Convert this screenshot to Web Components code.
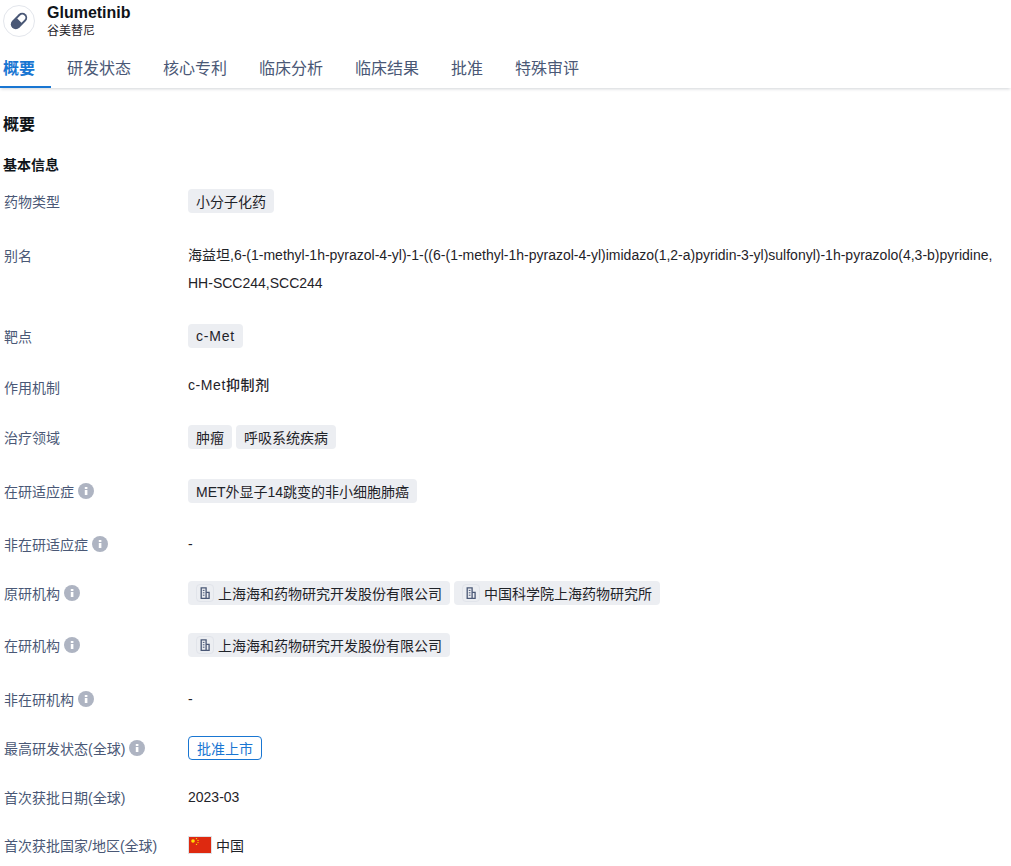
<!DOCTYPE html>
<html lang="zh">
<head>
<meta charset="utf-8">
<title>Glumetinib</title>
<style>
    html, body { margin: 0; background: #fff; }
    body { font-family: "Liberation Sans", "Noto Sans CJK SC", sans-serif; color: #1f2329; overflow: hidden; height: 866px; }
</style>
</head>
<body>
<drug-header name="Glumetinib" sub="谷美替尼"></drug-header>
<tab-bar></tab-bar>
<main-panel>
    <info-row label="药物类型" top="0"><info-tag>小分子化药</info-tag></info-row>
    <info-row label="别名" top="28" text>海益坦,6-(1-methyl-1h-pyrazol-4-yl)-1-((6-(1-methyl-1h-pyrazol-4-yl)imidazo(1,2-a)pyridin-3-yl)sulfonyl)-1h-pyrazolo(4,3-b)pyridine,<br>HH-SCC244,SCC244</info-row>
    <info-row label="靶点" top="27"><info-tag wide>c-Met</info-tag></info-row>
    <info-row label="作用机制" top="25" text strong>c-Met抑制剂</info-row>
    <info-row label="治疗领域" top="24"><info-tag>肿瘤</info-tag><info-tag>呼吸系统疾病</info-tag></info-row>
    <info-row label="在研适应症" info top="30"><info-tag>MET外显子14跳变的非小细胞肺癌</info-tag></info-row>
    <info-row label="非在研适应症" info top="29">-</info-row>
    <info-row label="原研机构" info top="25"><info-tag org>上海海和药物研究开发股份有限公司</info-tag><info-tag org>中国科学院上海药物研究所</info-tag></info-row>
    <info-row label="在研机构" info top="28"><info-tag org>上海海和药物研究开发股份有限公司</info-tag></info-row>
    <info-row label="非在研机构" info top="30">-</info-row>
    <info-row label="最高研发状态(全球)" info top="25"><status-tag>批准上市</status-tag></info-row>
    <info-row label="首次获批日期(全球)" top="25">2023-03</info-row>
    <info-row label="首次获批国家/地区(全球)" top="24"><flag-cn></flag-cn>中国</info-row>
</main-panel>

<script>
class DrugHeader extends HTMLElement {
    constructor() {
        super();
        this.attachShadow({ mode: 'open' });
    }
    connectedCallback() {
        this.shadowRoot.innerHTML = `
            <style>
                :host { display: flex; align-items: flex-start; gap: 12px; padding: 5px 0 0 3px; height: 41px; box-sizing: border-box; }
                .logo { width: 32px; height: 32px; box-sizing: border-box; border: 1px solid #e3e6ec; border-radius: 50%; display: flex; align-items: center; justify-content: center; }
                .name { font-size: 16px; font-weight: 700; line-height: 16px; color: #0f1419; }
                .sub { font-size: 12px; line-height: 16px; margin-top: 2px; color: #1f2329; }
            </style>
            <div class="logo">
                <svg width="22" height="22" viewBox="0 0 22 22">
                    <g transform="rotate(-45 11 11)">
                        <rect x="1.5" y="6" width="19" height="10" rx="5" fill="#4a5876"/>
                        <path d="M11.5 8h4.2a3 3 0 0 1 0 6h-4.2z" fill="#fff"/>
                    </g>
                </svg>
            </div>
            <div>
                <div class="name">${this.getAttribute('name')}</div>
                <div class="sub">${this.getAttribute('sub')}</div>
            </div>
        `;
    }
}
customElements.define('drug-header', DrugHeader);

class TabBar extends HTMLElement {
    constructor() {
        super();
        this.attachShadow({ mode: 'open' });
    }
    connectedCallback() {
        const tabs = ['概要', '研发状态', '核心专利', '临床分析', '临床结果', '批准', '特殊审评'];
        this.shadowRoot.innerHTML = `
            <style>
                :host { display: flex; height: 47px; box-shadow: 0 2px 3px -1px rgba(30, 40, 60, 0.2); }
                .tab { padding: 0 16px; font-size: 16px; line-height: 56px; height: 47px; box-sizing: border-box; color: #4a5876; }
                .tab.active { padding: 0 16px 0 3px; color: #1976d2; font-weight: 700; border-bottom: 2px solid #1976d2; }
            </style>
            ${tabs.map((t, i) => `<div class="tab ${i === 0 ? 'active' : ''}">${t}</div>`).join('')}
        `;
    }
}
customElements.define('tab-bar', TabBar);

class MainPanel extends HTMLElement {
    constructor() {
        super();
        this.attachShadow({ mode: 'open' });
    }
    connectedCallback() {
        this.shadowRoot.innerHTML = `
            <style>
                :host { display: block; padding: 0 0 0 3px; }
                h2 { margin: 0; padding-top: 27px; font-size: 16px; line-height: 20px; font-weight: 700; color: #0f1419; }
                h3 { margin: 0; padding-top: 20px; font-size: 14px; line-height: 20px; font-weight: 700; color: #0f1419; }
                .rows { padding-top: 14px; display: flex; flex-direction: column; }
            </style>
            <h2>概要</h2>
            <h3>基本信息</h3>
            <div class="rows"><slot></slot></div>
        `;
    }
}
customElements.define('main-panel', MainPanel);

class InfoRow extends HTMLElement {
    constructor() {
        super();
        this.attachShadow({ mode: 'open' });
    }
    connectedCallback() {
        const info = this.hasAttribute('info') ? `
            <svg class="i" width="16" height="16" viewBox="0 0 16 16">
                <circle cx="8" cy="8" r="8" fill="#aeb4c2"/>
                <rect x="6.8" y="7" width="2.6" height="5" fill="#fff"/>
                <rect x="6.8" y="4" width="2.6" height="2" fill="#fff"/>
            </svg>` : '';
        const text = this.hasAttribute('text');
        this.style.marginTop = this.getAttribute('top') + 'px';
        this.shadowRoot.innerHTML = `
            <style>
                :host { display: flex; align-items: flex-start; font-size: 14px; }
                .label { width: 185px; flex: none; padding-left: 1px; box-sizing: border-box; display: flex; align-items: center; gap: 4px; height: 24px; color: #4a5876; }
                .label.text { height: 28px; }
                .i { flex: none; }
                .value { flex: 1; min-width: 0; display: flex; align-items: center; flex-wrap: wrap; gap: 4px; min-height: 24px; color: #1f2329; }
                .value.text { display: block; line-height: 28px; }
                .value.strong { font-weight: 500; letter-spacing: 0.6px; margin-top: -2px; }
            </style>
            <div class="label ${text ? 'text' : ''}">${this.getAttribute('label')}${info}</div>
            <div class="value ${text ? 'text' : ''} ${this.hasAttribute('strong') ? 'strong' : ''}"><slot></slot></div>
        `;
    }
}
customElements.define('info-row', InfoRow);

class InfoTag extends HTMLElement {
    constructor() {
        super();
        this.attachShadow({ mode: 'open' });
    }
    connectedCallback() {
        const org = this.hasAttribute('org') ? `
            <span class="org">
                <svg width="12" height="12" viewBox="0 0 12 12" fill="none" stroke="#4a5876" stroke-width="1.3">
                    <path d="M2.2 11.4V.9h4.9v10.5z"/>
                    <path d="M7.1 5.4h3v6h-3"/>
                    <path d="M3.8 3.4h1.7M3.8 5.8h1.7M3.8 8.2h1.7" stroke-width="1"/>
                </svg>
            </span>` : '';
        if (this.hasAttribute('wide')) this.style.letterSpacing = '0.8px';
        this.shadowRoot.innerHTML = `
            <style>
                :host { display: inline-flex; align-items: center; height: 24px; padding: 0 8px; gap: 4px; background: #eceef2; border-radius: 4px; font-size: 14px; color: #1f2329; }
                .org { width: 18px; height: 18px; box-sizing: border-box; border: 1px solid #e1e4ea; border-radius: 4px; display: flex; align-items: center; justify-content: center; }
            </style>
            ${org}<slot></slot>
        `;
    }
}
customElements.define('info-tag', InfoTag);

class StatusTag extends HTMLElement {
    constructor() {
        super();
        this.attachShadow({ mode: 'open' });
    }
    connectedCallback() {
        this.shadowRoot.innerHTML = `
            <style>
                :host { display: inline-flex; align-items: center; height: 24px; box-sizing: border-box; padding: 0 8px; border: 1px solid #1976d2; border-radius: 4px; font-size: 14px; color: #1976d2; }
            </style>
            <slot></slot>
        `;
    }
}
customElements.define('status-tag', StatusTag);

class FlagCn extends HTMLElement {
    constructor() {
        super();
        this.attachShadow({ mode: 'open' });
    }
    connectedCallback() {
        this.shadowRoot.innerHTML = `
            <style>
                :host { display: inline-flex; }
            </style>
            <svg width="24" height="18" viewBox="0 0 24 18">
                <rect width="24" height="18" fill="#e0e2e6"/>
                <rect x="1" y="1" width="22" height="16" fill="#de2910"/>
                <circle cx="5" cy="5" r="1.8" fill="#ffde00"/>
                <circle cx="8.5" cy="2.6" r=".7" fill="#ffde00"/>
                <circle cx="10" cy="4.4" r=".7" fill="#ffde00"/>
                <circle cx="10" cy="6.6" r=".7" fill="#ffde00"/>
                <circle cx="8.5" cy="8.4" r=".7" fill="#ffde00"/>
            </svg>
        `;
    }
}
customElements.define('flag-cn', FlagCn);
</script>
</body>
</html>
